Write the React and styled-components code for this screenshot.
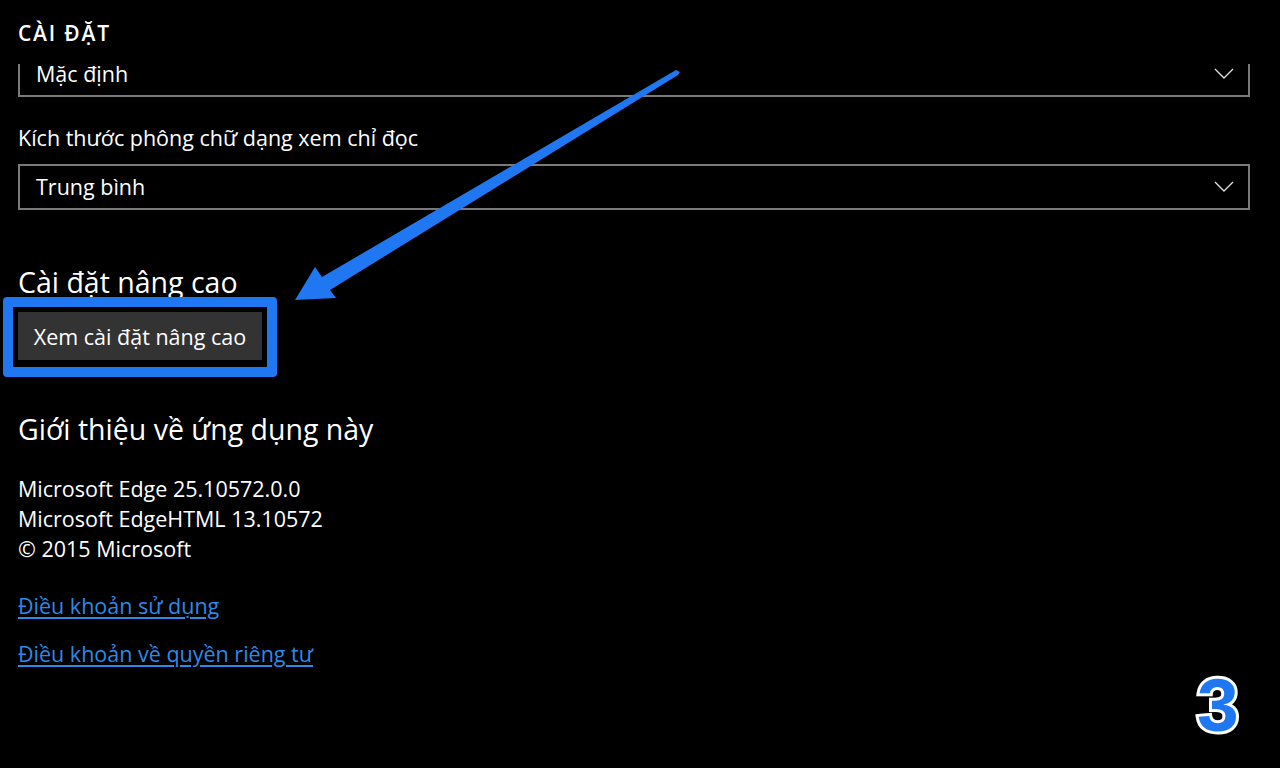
import React from 'react'
import styled, { createGlobalStyle } from 'styled-components'

const GlobalStyle = createGlobalStyle`
  html, body {
    margin: 0;
    padding: 0;
    background: #000;
  }
  body {
    font-family: "Open Sans", "Noto Sans", sans-serif;
    color: #fff;
    overflow: hidden;
  }
`

const Page = styled.div`
  position: relative;
  width: 1280px;
  height: 768px;
  background: #000;
  overflow: hidden;
`

const Header = styled.header`
  height: 64px;
  padding: 2px 18px 0;
  display: flex;
  align-items: center;
  font-size: 21px;
  font-weight: 600;
  letter-spacing: 1.8px;
  box-sizing: border-box;
`

const Content = styled.div`
  padding: 0 30px 0 18px;
  display: flex;
  flex-direction: column;
`

const Select = styled.div`
  height: ${p => (p.$cut ? 33 : 46)}px;
  box-sizing: border-box;
  border: 2px solid #7a7a7a;
  border-top-width: ${p => (p.$cut ? 0 : 2)}px;
  display: flex;
  align-items: ${p => (p.$cut ? 'flex-start' : 'center')};
  justify-content: space-between;
  padding: ${p => (p.$cut ? '0 14px 0 16px' : '0 14px 0 16px')};
  font-size: 21.5px;
  line-height: ${p => (p.$cut ? '20px' : '28px')};
  svg {
    margin-top: ${p => (p.$cut ? 4 : 0)}px;
  }
`

const Label = styled.div`
  font-size: 21.5px;
  line-height: 28px;
  margin: 27px 0 12px;
`

const SectionTitle = styled.h2`
  margin: ${p => p.$top}px 0 0;
  font-size: 28.5px;
  font-weight: 400;
  line-height: 36px;
`

const ButtonWrap = styled.div`
  position: relative;
  align-self: flex-start;
  margin-top: 12px;
  &::before {
    content: '';
    position: absolute;
    left: -15px;
    right: -15px;
    top: -15px;
    bottom: -17px;
    border: 10px solid #1f78f2;
    border-radius: 4px;
  }
`

const Button = styled.button`
  display: block;
  width: 244px;
  height: 48px;
  border: none;
  background: #333;
  color: #fff;
  font-family: inherit;
  font-size: 21.5px;
  padding: 0;
`

const InfoBlock = styled.div`
  margin-top: 27px;
  font-size: 21.5px;
  line-height: 30px;
`

const Links = styled.div`
  display: flex;
  flex-direction: column;
  gap: 20px;
  margin-top: 28px;
`

const Link = styled.a`
  color: #2e8ae6;
  font-size: 21.5px;
  line-height: 28px;
  text-decoration: underline;
  text-underline-offset: 3px;
  align-self: flex-start;
`

const Arrow = styled.svg`
  position: absolute;
  left: 0;
  top: 0;
  pointer-events: none;
`

const StepNumber = styled.div`
  position: absolute;
  left: 1197px;
  top: 660px;
  font-family: "Liberation Sans", Arial, sans-serif;
  font-weight: 700;
  font-size: 75px;
  line-height: 90px;
  color: #1f78f2;
  -webkit-text-stroke: 6px #fff;
  paint-order: stroke fill;
`

const Chevron = () => (
  <svg width="20" height="12" viewBox="0 0 20 12">
    <path d="M1 1 L10 10 L19 1" fill="none" stroke="#ddd" strokeWidth="1.4" />
  </svg>
)

export default function App() {
  return (
    <Page>
      <GlobalStyle />
      <Header>CÀI ĐẶT</Header>
      <Content>
        <Select $cut>
          <span>Mặc định</span>
          <Chevron />
        </Select>
        <Label>Kích thước phông chữ dạng xem chỉ đọc</Label>
        <Select>
          <span>Trung bình</span>
          <Chevron />
        </Select>
        <SectionTitle $top={54}>Cài đặt nâng cao</SectionTitle>
        <ButtonWrap>
          <Button>Xem cài đặt nâng cao</Button>
        </ButtonWrap>
        <SectionTitle $top={51}>Giới thiệu về ứng dụng này</SectionTitle>
        <InfoBlock>
          <div>Microsoft Edge 25.10572.0.0</div>
          <div>Microsoft EdgeHTML 13.10572</div>
          <div>© 2015 Microsoft</div>
        </InfoBlock>
        <Links>
          <Link>Điều khoản sử dụng</Link>
          <Link>Điều khoản về quyền riêng tư</Link>
        </Links>
      </Content>
      <Arrow width="1280" height="768" viewBox="0 0 1280 768">
        <path
          d="M295 300 L315 267 L322 277 L676 70 L680 72 L678 75 L330 290 L336 298 Z"
          fill="#1f78f2"
        />
      </Arrow>
      <StepNumber>3</StepNumber>
    </Page>
  )
}
